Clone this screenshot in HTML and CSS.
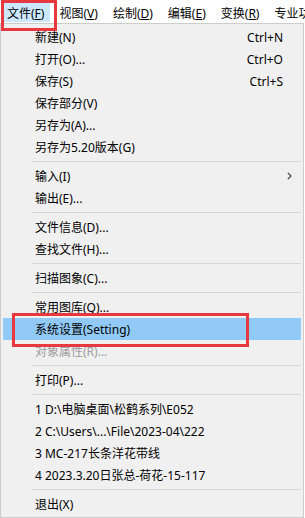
FILE: index.html
```html
<!DOCTYPE html>
<html lang="zh-CN">
<head>
<meta charset="utf-8">
<title>文件菜单</title>
<link rel="stylesheet" href="styles.css">
</head>
<body>
<div class="menubar">
  <div class="mb-item active">文件(<u>F</u>)</div>
  <div class="mb-item">视图(<u>V</u>)</div>
  <div class="mb-item">绘制(<u>D</u>)</div>
  <div class="mb-item">编辑(<u>E</u>)</div>
  <div class="mb-item">变换(<u>R</u>)</div>
  <div class="mb-item">专业功能</div>
</div>
<div class="menu">
  <div class="item"><span class="label">新建(N)</span><span class="key">Ctrl+N</span></div>
  <div class="item"><span class="label">打开(O)...</span><span class="key">Ctrl+O</span></div>
  <div class="item"><span class="label">保存(S)</span><span class="key">Ctrl+S</span></div>
  <div class="item"><span class="label">保存部分(V)</span></div>
  <div class="item"><span class="label">另存为(A)...</span></div>
  <div class="item"><span class="label">另存为5.20版本(G)</span></div>
  <div class="sep"></div>
  <div class="item"><span class="label">输入(I)</span><svg class="arrow" width="5" height="8" viewBox="0 0 5 8"><path d="M0.8 0.8 L4 4 L0.8 7.2" fill="none" stroke="#333" stroke-width="1.1"/></svg></div>
  <div class="item"><span class="label">输出(E)...</span></div>
  <div class="sep"></div>
  <div class="item"><span class="label">文件信息(D)...</span></div>
  <div class="item"><span class="label">查找文件(H)...</span></div>
  <div class="sep"></div>
  <div class="item"><span class="label">扫描图象(C)...</span></div>
  <div class="sep"></div>
  <div class="item"><span class="label">常用图库(Q)...</span></div>
  <div class="item hover"><span class="label">系统设置(Setting)</span></div>
  <div class="item disabled"><span class="label">对象属性(R)...</span></div>
  <div class="sep"></div>
  <div class="item"><span class="label">打印(P)...</span></div>
  <div class="sep"></div>
  <div class="item"><span class="label">1 D:\电脑桌面\松鹤系列\E052</span></div>
  <div class="item"><span class="label">2 C:\Users\...\File\2023-04\222</span></div>
  <div class="item"><span class="label">3 MC-217长条洋花带线</span></div>
  <div class="item"><span class="label">4 2023.3.20日张总-荷花-15-117</span></div>
  <div class="sep"></div>
  <div class="item"><span class="label">退出(X)</span></div>
</div>
<div class="callout callout-file"></div>
<div class="callout callout-setting"></div>
</body>
</html>
```

FILE: styles.css
```css
html, body {
  margin: 0;
  padding: 0;
  background: #ffffff;
}
body {
  font-family: "Noto Sans", "Noto Sans CJK SC", sans-serif;
  font-size: 12px;
  color: #000000;
  width: 305px;
  height: 518px;
  overflow: hidden;
  position: relative;
}
.menubar {
  height: 23px;
  display: flex;
  gap: 6px;
  padding-left: 4px;
  white-space: nowrap;
  overflow: hidden;
  background: #ffffff;
}
.mb-item {
  margin-top: 3px;
  height: 19px;
  line-height: 21px;
  padding: 0 6px 0 3px;
  flex: none;
}
.mb-item u {
  text-underline-offset: 1px;
}
.mb-item.active {
  background: #cce8ff;
}
.menu {
  width: 298px;
  border: 1px solid #cccccc;
  background: #f0f0f0;
  padding: 2px;
}
.item {
  height: 22px;
  display: flex;
  align-items: center;
  padding: 0 18px 0 32px;
  white-space: nowrap;
}
.item .label {
  flex: 1;
}
.item .key {
  text-align: right;
}
.item .arrow {
  margin-right: -9px;
}
.item.hover {
  background: #91c9f7;
}
.item.disabled {
  color: #9d9d9d;
}
.sep {
  height: 1px;
  margin: 3px 0 3px 29px;
  background: #d7d7d7;
}
.callout {
  position: absolute;
  border: 3px solid #e5393f;
  box-sizing: border-box;
}
.callout-file {
  left: 1px;
  top: 0;
  width: 56px;
  height: 31px;
}
.callout-setting {
  left: 12px;
  top: 313px;
  width: 237px;
  height: 34px;
}
```
